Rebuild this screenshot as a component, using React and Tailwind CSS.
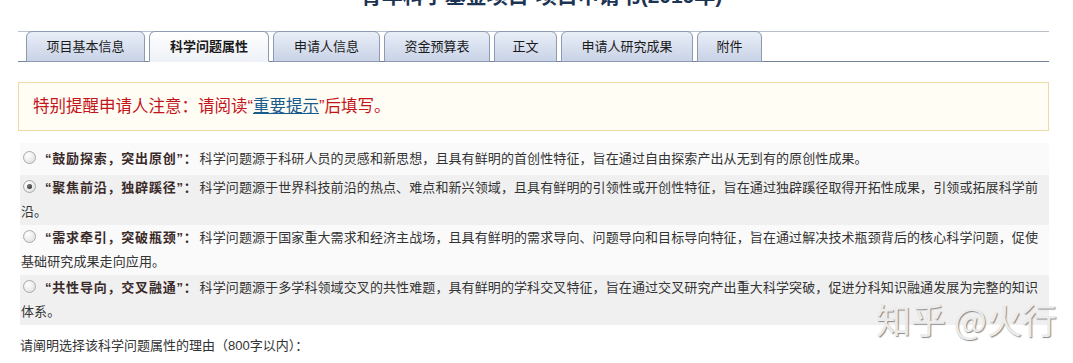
const tabs = [
  { label: "项目基本信息", w: "w-[119px]" },
  { label: "科学问题属性", w: "w-[120px]", active: true },
  { label: "申请人信息", w: "w-[107px]" },
  { label: "资金预算表", w: "w-[106px]" },
  { label: "正文", w: "w-[63px]" },
  { label: "申请人研究成果", w: "w-[132px]" },
  { label: "附件", w: "w-[65px]" },
];

const options = [
  {
    title: "“鼓励探索，突出原创”：",
    text: "科学问题源于科研人员的灵感和新思想，且具有鲜明的首创性特征，旨在通过自由探索产出从无到有的原创性成果。",
  },
  {
    title: "“聚焦前沿，独辟蹊径”：",
    text: "科学问题源于世界科技前沿的热点、难点和新兴领域，且具有鲜明的引领性或开创性特征，旨在通过独辟蹊径取得开拓性成果，引领或拓展科学前沿。",
    checked: true,
  },
  {
    title: "“需求牵引，突破瓶颈”：",
    text: "科学问题源于国家重大需求和经济主战场，且具有鲜明的需求导向、问题导向和目标导向特征，旨在通过解决技术瓶颈背后的核心科学问题，促使基础研究成果走向应用。",
  },
  {
    title: "“共性导向，交叉融通”：",
    text: "科学问题源于多学科领域交叉的共性难题，具有鲜明的学科交叉特征，旨在通过交叉研究产出重大科学突破，促进分科知识融通发展为完整的知识体系。",
  },
];

function Radio({ checked }) {
  return (
    <span className="relative -top-[2px] mr-[9px] ml-[2px] inline-flex h-[13px] w-[13px] items-center justify-center rounded-full border border-[#a9a9a9] bg-[radial-gradient(circle_at_35%_30%,#ffffff,#dcdcdc)] align-middle">
      {checked && (
        <span className="h-[5px] w-[5px] rounded-full bg-[radial-gradient(circle_at_40%_35%,#777,#222)]" />
      )}
    </span>
  );
}

export default function App() {
  return (
    <div className="relative h-[363px] w-[1073px] overflow-hidden bg-white font-['Liberation_Sans','Noto_Sans_CJK_SC',sans-serif] text-[#333]">
      <h1 className="-mt-[16px] h-[24px] pl-[10px] text-center text-[21px] font-bold leading-[24px] text-[#1d3352]">
        青年科学基金项目-项目申请书(2019年)
      </h1>

      <div className="mt-[23px] ml-[18px] mr-[24px] flex h-[31px] border-t border-b border-t-[#b9c0cc] border-b-[#74819b] pl-[8px]">
        {tabs.map((t, i) => (
          <div
            key={t.label}
            className={`${t.w} ${i > 0 ? "ml-[4px]" : ""} -mt-px flex h-[31px] items-center justify-center rounded-t-[6px] border border-[#8c9ab3] text-[13px] text-[#1a1a1a] ${
              t.active
                ? "border-b-[#eef1f6] bg-[linear-gradient(#ffffff,#eef1f6)] font-bold"
                : "bg-[linear-gradient(#e9eef7,#c9d3e7)]"
            }`}
          >
            {t.label}
          </div>
        ))}
      </div>

      <div className="mt-[20px] ml-[18px] mr-[24px] flex h-[49px] items-center border border-[#efd9a6] bg-[#fffdf4] pl-[14px] text-[16.5px] text-[#c4141b]">
        <span>
          特别提醒申请人注意：请阅读“
          <a className="text-[#1a5b8e] underline">重要提示</a>
          ”后填写。
        </span>
      </div>

      <div className="mt-[12px] ml-[20px] mr-[24px] text-[13px] leading-[24px] tracking-[0.1px]">
        {options.map((o, i) => (
          <div
            key={o.title}
            className={`pr-[6px] pl-px ${i === 0 ? "py-[4px]" : "py-px"} ${
              i % 2 === 0 ? "bg-[#fafafa]" : "bg-[#f0f0f0]"
            }`}
          >
            <Radio checked={o.checked} />
            <span className="pr-[2px] font-bold tracking-[0.8px] text-[#3a2a2a]">{o.title}</span>
            {o.text}
          </div>
        ))}
      </div>

      <p className="mt-[9px] ml-[20px] text-[13px] leading-[24px]">
        请阐明选择该科学问题属性的理由（800字以内）：
      </p>

      <div className="absolute left-[876px] top-[297px] font-['Noto_Sans_CJK_SC',sans-serif] text-[35px] leading-[44px] text-[#ececec] [text-shadow:1px_1px_1px_#8a8a8a]">
        知乎 @火行
      </div>
    </div>
  );
}
